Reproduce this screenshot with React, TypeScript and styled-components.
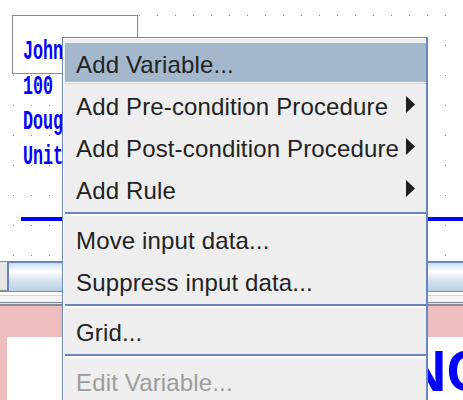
import React from "react";
import styled, { createGlobalStyle } from "styled-components";

interface MenuEntry {
    label: string;
    submenu?: boolean;
    active?: boolean;
    disabled?: boolean;
    separatorBefore?: boolean;
}

const dataLines = ["100", "Doug", "Unit"];

const menuEntries: MenuEntry[] = [
    { label: "Add Variable...", active: true },
    { label: "Add Pre-condition Procedure", submenu: true },
    { label: "Add Post-condition Procedure", submenu: true },
    { label: "Add Rule", submenu: true },
    { label: "Move input data...", separatorBefore: true },
    { label: "Suppress input data..." },
    { label: "Grid...", separatorBefore: true },
    { label: "Edit Variable...", disabled: true, separatorBefore: true }
];

const App: React.FC = () => {
    return (
        <Screen>
            <GlobalStyle />
            <Canvas>
                <FieldBox>
                    <DataLine>
                        <Glyphs>John</Glyphs>
                    </DataLine>
                </FieldBox>
                <DataColumn>
                    {dataLines.map((line) => (
                        <DataLine key={line}>
                            <Glyphs>{line}</Glyphs>
                        </DataLine>
                    ))}
                </DataColumn>
                <BlueRule />
            </Canvas>
            <TabBar>
                <TabStub />
                <Tab />
            </TabBar>
            <ThinDivider />
            <DoubleRule />
            <PinkFrame>
                <FrameBody>
                    <BigTitle>BALANCE</BigTitle>
                </FrameBody>
            </PinkFrame>

            <PopupMenu>
                {menuEntries.map((entry) => (
                    <React.Fragment key={entry.label}>
                        {entry.separatorBefore && <Separator />}
                        <MenuItem $active={entry.active} $disabled={entry.disabled}>
                            <span>{entry.label}</span>
                            {entry.submenu && (
                                <Arrow width="9" height="17" viewBox="0 0 9 17">
                                    <polygon points="0,0 9,8.5 0,17" fill="#1e1e1e" />
                                </Arrow>
                            )}
                        </MenuItem>
                    </React.Fragment>
                ))}
            </PopupMenu>
        </Screen>
    );
};

const GlobalStyle = createGlobalStyle`
    html, body {
        margin: 0;
        padding: 0;
        background: #ffffff;
    }
    body {
        overflow: hidden;
    }
`;

const Screen = styled.div`
    position: relative;
    width: 463px;
    height: 400px;
    overflow: hidden;
    font-family: "Liberation Sans", Arial, sans-serif;
`;

const Canvas = styled.div`
    height: 261px;
    box-sizing: border-box;
    padding-top: 15px;
    background-color: #ffffff;
    background-image: linear-gradient(to bottom, transparent 1px, #ffffff 1px),
        linear-gradient(to right, #8a8a8a 1px, #ffffff 1px);
    background-size: 18px 30px;
    background-position: 13px 15px;
`;

const FieldBox = styled.div`
    margin-left: 12px;
    width: 126px;
    height: 59px;
    box-sizing: border-box;
    border: 1px solid #8a8a8a;
    background: #ffffff;
    padding: 18px 0 0 10px;
`;

const DataColumn = styled.div`
    margin-top: -5px;
    padding-left: 23px;
`;

const DataLine = styled.div`
    height: 35px;
    display: flex;
    align-items: center;
    color: #0000ff;
    font-family: "Liberation Mono", "DejaVu Sans Mono", monospace;
    font-weight: bold;
    font-size: 16.7px;
`;

const Glyphs = styled.span`
    display: inline-block;
    transform: scaleY(1.65);
`;

const BlueRule = styled.div`
    margin: 43px 0 0 21px;
    height: 4px;
    background: #0000ff;
`;

const TabBar = styled.div`
    display: flex;
    height: 30px;
`;

const TabStub = styled.div`
    width: 7px;
    box-sizing: border-box;
    background: #e6e6e6;
    border-top: 1px solid #8a8a8a;
    border-bottom: 1px solid #8a8a8a;
`;

const Tab = styled.div`
    flex: 1;
    border-top: 2px solid #6a86bf;
    border-left: 2px solid #6a86bf;
    background: linear-gradient(
        to bottom,
        #c8ddf2 0%,
        #ffffff 30%,
        #dde8f3 55%,
        #b8cfe5 100%
    );
`;

const ThinDivider = styled.div`
    height: 10px;
    border-top: 1px solid #8090a8;
    background: linear-gradient(
        to bottom,
        #ffffff 3px,
        #d6d6d6 3px,
        #d6d6d6 4px,
        #f4f4f4 4px
    );
`;

const DoubleRule = styled.div`
    height: 1px;
    background: #e0e0e0;
    border-top: 1px solid #858b92;
    border-bottom: 2px solid #858b92;
`;

const PinkFrame = styled.div`
    background: #eebdbd;
    padding: 31px 0 0 7px;
    height: 120px;
`;

const FrameBody = styled.div`
    background: #ffffff;
    height: 100%;
    padding: 6px 0 0 240px;
    white-space: nowrap;
    overflow: hidden;
`;

const BigTitle = styled.div`
    color: #0000ff;
    font-weight: bold;
    font-size: 57px;
    line-height: 57px;
`;

const PopupMenu = styled.div`
    position: absolute;
    left: 62px;
    top: 37px;
    width: 366px;
    box-sizing: border-box;
    border: 1px solid #6a86bf;
    border-right-width: 2px;
    padding: 5px 0 0 2px;
    background: #eeeeee;
    box-shadow: inset 1px 1px 0 #ffffff;
    font-size: 24px;
    letter-spacing: 0.15px;
    color: #222222;
`;

const MenuItem = styled.div<{ $active?: boolean; $disabled?: boolean }>`
    height: 42px;
    box-sizing: border-box;
    padding: 2px 11px 0 11px;
    display: flex;
    align-items: center;
    justify-content: space-between;
    white-space: nowrap;
    color: ${(props) => (props.$disabled ? "#9c9c9c" : "#222222")};
    background: ${(props) =>
        props.$active
            ? "linear-gradient(to bottom, #a3b8cc 0, #a3b8cc 39px, #ffffff 39px, #ffffff 40px, #c5d2e1 40px, #c5d2e1 41px, transparent 41px)"
            : "transparent"};
`;

const Arrow = styled.svg`
    display: block;
    margin-bottom: 6px;
    flex-shrink: 0;
`;

const Separator = styled.div`
    height: 0;
    margin: 1px 0 3px;
    border-top: 2px solid #6a86bf;
    border-bottom: 2px solid #ffffff;
`;

export default App;
